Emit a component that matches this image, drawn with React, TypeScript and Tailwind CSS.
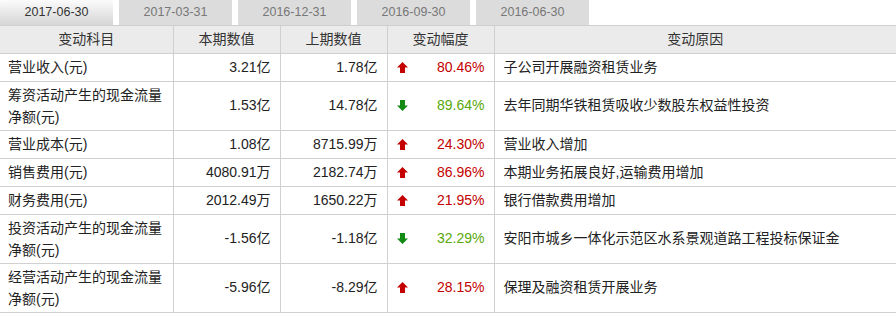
const tabs = ["2017-06-30", "2017-03-31", "2016-12-31", "2016-09-30", "2016-06-30"];

interface Row {
  item: string[];
  cur: string;
  prev: string;
  up: boolean;
  pct: string;
  reason: string;
}

const rows: Row[] = [
  { item: ["营业收入(元)"], cur: "3.21亿", prev: "1.78亿", up: true, pct: "80.46%", reason: "子公司开展融资租赁业务" },
  { item: ["筹资活动产生的现金流量", "净额(元)"], cur: "1.53亿", prev: "14.78亿", up: false, pct: "89.64%", reason: "去年同期华铁租赁吸收少数股东权益性投资" },
  { item: ["营业成本(元)"], cur: "1.08亿", prev: "8715.99万", up: true, pct: "24.30%", reason: "营业收入增加" },
  { item: ["销售费用(元)"], cur: "4080.91万", prev: "2182.74万", up: true, pct: "86.96%", reason: "本期业务拓展良好,运输费用增加" },
  { item: ["财务费用(元)"], cur: "2012.49万", prev: "1650.22万", up: true, pct: "21.95%", reason: "银行借款费用增加" },
  { item: ["投资活动产生的现金流量", "净额(元)"], cur: "-1.56亿", prev: "-1.18亿", up: false, pct: "32.29%", reason: "安阳市城乡一体化示范区水系景观道路工程投标保证金" },
  { item: ["经营活动产生的现金流量", "净额(元)"], cur: "-5.96亿", prev: "-8.29亿", up: true, pct: "28.15%", reason: "保理及融资租赁开展业务" },
];

function Arrow({ up }: { up: boolean }) {
  return (
    <svg width="11" height="11" viewBox="0 0 11 11" className={up ? "shrink-0" : "shrink-0 rotate-180"}>
      <path d="M5.5 0 L11 5.5 L8 5.5 L8 11 L3 11 L3 5.5 L0 5.5 Z" fill={up ? "#c40000" : "#138a13"} />
    </svg>
  );
}

export default function App() {
  return (
    <div className="w-[896px] h-[314px] bg-white font-['Liberation_Sans','Noto_Sans_CJK_SC',sans-serif] text-[14px] text-[#222]">
      {/* Tabs */}
      <div className="flex gap-[6px] h-[26px] border-b border-[#cfcfcf]">
        {tabs.map((t, i) => (
          <div
            key={t}
            className={
              i === 0
                ? "w-[113px] h-[25px] flex items-center justify-center rounded-t-[3px] bg-gradient-to-b from-[#fbfbfb] to-[#d6d6d6] text-[12.5px] text-[#333]"
                : "w-[113px] h-[25px] flex items-center justify-center bg-[#dcdcdc] text-[12.5px] text-[#777]"
            }
          >
            {t}
          </div>
        ))}
      </div>

      {/* Table */}
      <table className="w-[896px] border-collapse table-fixed">
        <colgroup>
          <col className="w-[173px]" />
          <col className="w-[107px]" />
          <col className="w-[107px]" />
          <col className="w-[107px]" />
          <col />
        </colgroup>
        <thead>
          <tr className="h-[27px] bg-[#ebebeb] text-[#333]">
            <th className="font-normal border-b border-r border-[#d0d0d0]">变动科目</th>
            <th className="font-normal border-b border-r border-[#d0d0d0]">本期数值</th>
            <th className="font-normal border-b border-r border-[#d0d0d0]">上期数值</th>
            <th className="font-normal border-b border-r border-[#d0d0d0]">变动幅度</th>
            <th className="font-normal border-b border-[#d0d0d0]">变动原因</th>
          </tr>
        </thead>
        <tbody>
          {rows.map((r, i) => (
            <tr key={i} className={r.item.length > 1 ? "h-[49px]" : "h-[28px]"}>
              <td className="border-b border-r border-[#d0d0d0] pl-2 leading-[22px]">
                {r.item.map((s) => (
                  <div key={s}>{s}</div>
                ))}
              </td>
              <td className="border-b border-r border-[#d0d0d0] pr-[9px] text-right">{r.cur}</td>
              <td className="border-b border-r border-[#d0d0d0] pr-[9px] text-right">{r.prev}</td>
              <td className="border-b border-r border-[#d0d0d0] px-[9px]">
                <div className="flex items-center justify-between">
                  <Arrow up={r.up} />
                  <span className={r.up ? "text-[#c40000]" : "text-[#5aa80a]"}>{r.pct}</span>
                </div>
              </td>
              <td className="border-b border-[#d0d0d0] pl-[9px]">{r.reason}</td>
            </tr>
          ))}
        </tbody>
      </table>
    </div>
  );
}
